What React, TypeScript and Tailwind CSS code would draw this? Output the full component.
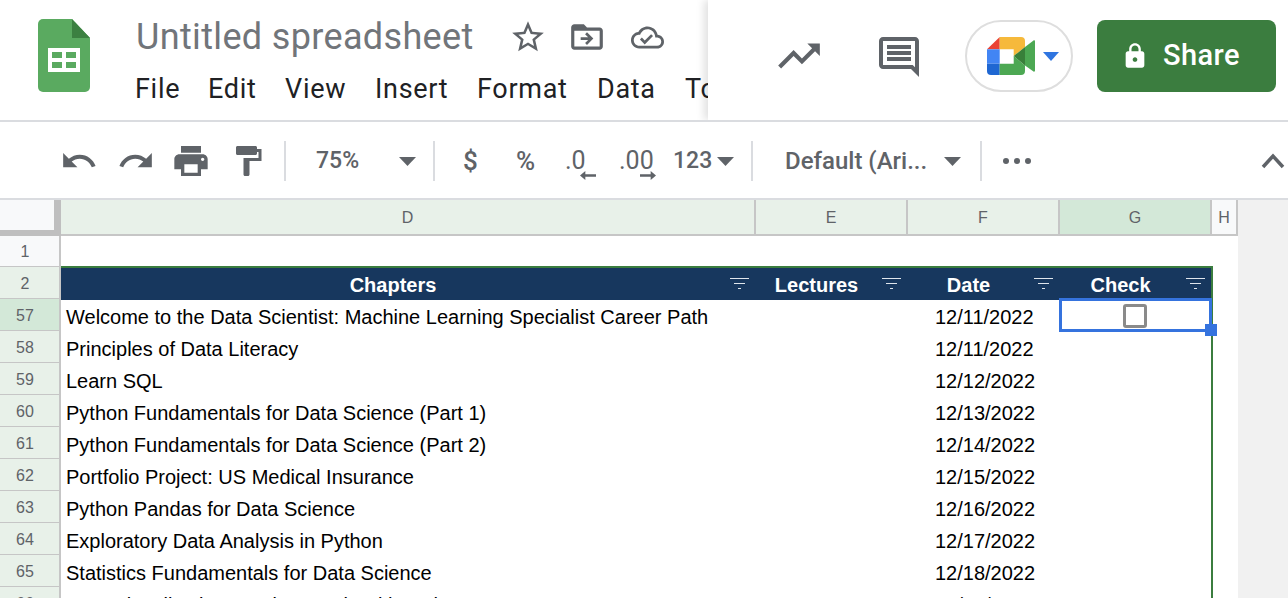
const GREY = '#5f6368';

const ROWS = [
  { n: 57, text: 'Welcome to the Data Scientist: Machine Learning Specialist Career Path', date: '12/11/2022' },
  { n: 58, text: 'Principles of Data Literacy', date: '12/11/2022' },
  { n: 59, text: 'Learn SQL', date: '12/12/2022' },
  { n: 60, text: 'Python Fundamentals for Data Science (Part 1)', date: '12/13/2022' },
  { n: 61, text: 'Python Fundamentals for Data Science (Part 2)', date: '12/14/2022' },
  { n: 62, text: 'Portfolio Project: US Medical Insurance', date: '12/15/2022' },
  { n: 63, text: 'Python Pandas for Data Science', date: '12/16/2022' },
  { n: 64, text: 'Exploratory Data Analysis in Python', date: '12/17/2022' },
  { n: 65, text: 'Statistics Fundamentals for Data Science', date: '12/18/2022' },
  { n: 66, text: 'Data Visualization Fundamentals with Python', date: '12/19/2022' },
];

const MENU = [
  { label: 'File', cls: 'w-[73px]' },
  { label: 'Edit', cls: 'w-[77px]' },
  { label: 'View', cls: 'w-[90px]' },
  { label: 'Insert', cls: 'w-[102px]' },
  { label: 'Format', cls: 'w-[120px]' },
  { label: 'Data', cls: 'w-[88px]' },
  { label: 'Tools', cls: 'w-[70px]' },
];

function Icon({ d, size, className }: { d: string; size: number; className?: string }) {
  return (
    <svg width={size} height={size} viewBox="0 0 24 24" fill={GREY} className={className}>
      <path d={d} />
    </svg>
  );
}

function Caret({ className }: { className?: string }) {
  return (
    <svg width="17" height="9" viewBox="0 0 17 9" className={className}>
      <path d="M0 0h17l-8.5 9z" fill={GREY} />
    </svg>
  );
}

function Divider({ className }: { className?: string }) {
  return <div className={`h-10 w-0.5 shrink-0 bg-[#dadce0] ${className ?? ''}`} />;
}

function SheetsLogo() {
  return (
    <svg width="52" height="73" viewBox="0 0 52 73" className="shrink-0">
      <path d="M5 0h29l18 19v49a5 5 0 0 1-5 5H5a5 5 0 0 1-5-5V5a5 5 0 0 1 5-5z" fill="#5aaa60" />
      <path d="M34 0l18 19H34z" fill="#3c8041" />
      <path d="M10 29h32v24H10z" fill="#fff" />
      <path d="M14 33h10v6H14zM28 33h10v6H28zM14 43h10v6H14zM28 43h10v6H28z" fill="#5aaa60" />
    </svg>
  );
}

function MeetLogo() {
  return (
    <svg width="48" height="38" viewBox="0 0 48 38">
      <path d="M0 12.3L12.7 0v12.3z" fill="#ea4335" />
      <path d="M12.7 0H34a4 4 0 0 1 4 4v6L26.7 19v-6.7h-14z" fill="#f6b93b" />
      <path d="M0 12.3h12.7v14.4H0z" fill="#4285f4" />
      <path d="M0 26.7h12.7V38H4a4 4 0 0 1-4-4z" fill="#1f67d2" />
      <path d="M12.7 26.7h14V19L38 28.5V34a4 4 0 0 1-4 4H12.7z" fill="#4ca853" />
      <path d="M26.7 19L38 10v18.5z" fill="#38803a" />
      <path d="M38 10l8.5-6.5c.8-.5 1.5 0 1.5 1v29c0 1-.7 1.5-1.5 1L38 28.5z" fill="#4ca853" />
    </svg>
  );
}

function FilterIcon() {
  return (
    <svg width="19" height="12" viewBox="0 0 19 12" className="mr-[7px] ml-[5px] shrink-0">
      <path d="M0 0h19v1H0zM4 5h11v1H4zM8 10h3v1H8z" fill="#dfe5ec" />
    </svg>
  );
}

function ColHeader({ label, cls }: { label: string; cls: string }) {
  return (
    <div className={`flex items-center justify-center border-r-2 border-[#c6c6c6] pt-0.5 text-base text-[#5f6368] ${cls}`}>
      {label}
    </div>
  );
}

function HeadCell({ label, cls }: { label: string; cls: string }) {
  return (
    <div className={`flex items-center ${cls}`}>
      <span className="flex-1 pt-0.5 text-center text-[20px] font-bold text-white">{label}</span>
      <FilterIcon />
    </div>
  );
}

export default function App() {
  return (
    <div className="relative h-[598px] w-[1288px] overflow-hidden bg-white font-['Liberation_Sans',sans-serif]">
      {/* title + menu */}
      <div className="relative flex h-[122px] overflow-hidden border-b-2 border-[#dadce0] pt-[19px] pl-[38px]">
        <SheetsLogo />
        <div className="ml-[46px] flex min-w-[800px] flex-col font-['Roboto',sans-serif]">
          <div className="flex h-[36px] items-center">
            <span className="w-[373px] text-[36px] leading-none font-normal tracking-[0.35px] text-[#71757a]">
              Untitled spreadsheet
            </span>
            <Icon
              size={38}
              d="M22 9.24l-7.19-.62L12 2 9.19 8.63 2 9.24l5.46 4.73L5.82 21 12 17.27 18.18 21l-1.63-7.03L22 9.24zM12 15.4l-3.76 2.27 1-4.28-3.32-2.88 4.38-.38L12 6.1l1.71 4.04 4.38.38-3.32 2.88 1 4.28L12 15.4z"
            />
            <Icon
              size={38}
              className="ml-[21px]"
              d="M20 6h-8l-2-2H4c-1.1 0-2 .9-2 2v12c0 1.1.9 2 2 2h16c1.1 0 2-.9 2-2V8c0-1.1-.9-2-2-2zm0 12H4V8h16v10zm-8-1l4-4-4-4-1.2 1.2 1.9 1.9H8v1.8h4.7l-1.9 1.9z"
            />
            <Icon
              size={33}
              className="ml-[25px]"
              d="M19.35 10.04C18.67 6.59 15.64 4 12 4 9.11 4 6.6 5.64 5.35 8.04 2.34 8.36 0 10.91 0 14c0 3.31 2.69 6 6 6h13c2.76 0 5-2.24 5-5 0-2.64-2.05-4.78-4.65-4.96zM19 18H6c-2.21 0-4-1.79-4-4 0-2.05 1.53-3.76 3.56-3.97l1.07-.11.5-.95C8.08 7.14 9.94 6 12 6c2.62 0 4.88 1.86 5.39 4.43l.3 1.5 1.53.11c1.56.1 2.78 1.41 2.78 2.96 0 1.65-1.35 3-3 3zm-9-3.82l-2.09-2.09L6.5 13.5 10 17l6.01-6.01-1.41-1.41z"
            />
          </div>
          <div className="mt-4 -ml-px flex text-[27px] leading-[36px] tracking-[0.7px] text-[#202124]">
            {MENU.map((m) => (
              <span key={m.label} className={`shrink-0 ${m.cls}`}>
                {m.label}
              </span>
            ))}
          </div>
        </div>

        {/* right part of the bar sits over the clipped menu */}
        <div className="absolute top-0 right-0 bottom-0 flex w-[580px] items-center bg-white pb-2 pl-[66px] shadow-[-4px_0_8px_rgba(0,0,0,0.12)]">
          <Icon size={50} d="M16 6l2.29 2.29-4.88 4.88-4-4L2 16.59 3.41 18l6-6 4 4 6.3-6.29L22 12V6z" />
          <Icon
            size={48}
            className="mt-0.5 ml-[51px]"
            d="M21.99 4c0-1.1-.89-2-1.99-2H4c-1.1 0-2 .9-2 2v12c0 1.1.9 2 2 2h14l4 4-.01-18zM20 4v13.17L18.83 16H4V4h16zM6 12h12v2H6zm0-3h12v2H6zm0-3h12v2H6z"
          />
          <div className="ml-[42px] flex h-[72px] w-[108px] items-center rounded-full border-2 border-[#dedede] pl-5">
            <MeetLogo />
            <svg width="16" height="9" viewBox="0 0 16 9" className="ml-2">
              <path d="M0 0h16L8 9z" fill="#2f75e0" />
            </svg>
          </div>
          <div className="ml-6 flex h-[72px] w-[179px] items-center rounded-lg bg-[#3b7d3f] pl-6 font-['Roboto',sans-serif] text-[29px] font-medium tracking-[0.4px] text-white">
            <svg width="28" height="28" viewBox="0 0 24 24" fill="#fff">
              <path d="M18 8h-1V6c0-2.76-2.24-5-5-5S7 3.24 7 6v2H6c-1.1 0-2 .9-2 2v10c0 1.1.9 2 2 2h12c1.1 0 2-.9 2-2V10c0-1.1-.9-2-2-2zm-6 9c-1.1 0-2-.9-2-2s.9-2 2-2 2 .9 2 2-.9 2-2 2zm3-9H9V6c0-1.66 1.34-3 3-3s3 1.34 3 3v2z" />
            </svg>
            <span className="ml-[14px]">Share</span>
          </div>
        </div>
      </div>

      {/* toolbar */}
      <div className="flex h-[78px] items-center border-b-2 border-[#dadce0] pt-0.5 font-['Roboto',sans-serif] text-[24px] font-medium text-[#5f6368]">
        <Icon
          size={38}
          className="ml-[60px] shrink-0"
          d="M12.5 8c-2.65 0-5.05.99-6.9 2.6L2 7v9h9l-3.62-3.62c1.39-1.16 3.16-1.88 5.12-1.88 3.54 0 6.55 2.31 7.6 5.5l2.37-.78C21.08 11.03 17.15 8 12.5 8z"
        />
        <Icon
          size={38}
          className="ml-[19px] shrink-0"
          d="M18.4 10.6C16.55 8.99 14.15 8 11.5 8c-4.65 0-8.58 3.03-9.96 7.22L3.9 16c1.05-3.19 4.05-5.5 7.6-5.5 1.95 0 3.73.72 5.12 1.88L13 16h9V7l-3.6 3.6z"
        />
        <Icon
          size={40}
          className="ml-[16px] shrink-0"
          d="M19 8H5c-1.66 0-3 1.34-3 3v6h4v4h12v-4h4v-6c0-1.66-1.34-3-3-3zm-3 11H8v-5h8v5zm3-7c-.55 0-1-.45-1-1s.45-1 1-1 1 .45 1 1-.45 1-1 1zm-1-9H6v4h12V3z"
        />
        <Icon
          size={36}
          className="ml-[19px] shrink-0"
          d="M18 4V3c0-.55-.45-1-1-1H5c-.55 0-1 .45-1 1v4c0 .55.45 1 1 1h12c.55 0 1-.45 1-1V6h1v4H9v11c0 .55.45 1 1 1h2c.55 0 1-.45 1-1v-9h8V4h-3z"
        />
        <Divider className="ml-[18px]" />
        <span className="ml-[30px] w-[45px] text-[23px]">75%</span>
        <Caret className="ml-[38px] shrink-0" />
        <Divider className="ml-[17px]" />
        <span className="ml-[28px] w-[16px] text-[26px]">$</span>
        <span className="ml-[37px] w-[24px] text-[26px]">%</span>
        <span className="relative ml-[25px] w-[24px] text-[25px] font-normal">
          .0
          <svg width="16" height="9" viewBox="0 0 18 10" className="absolute top-[29px] left-[15px]">
            <path d="M6 0v3.5h12v3H6V10L0 5z" fill={GREY} />
          </svg>
        </span>
        <span className="relative ml-[30px] w-[36px] text-[25px] font-normal">
          .00
          <svg width="16" height="9" viewBox="0 0 18 10" className="absolute top-[29px] left-[21px]">
            <path d="M12 0v3.5H0v3h12V10l6-5z" fill={GREY} />
          </svg>
        </span>
        <span className="ml-[18px] w-[41px] text-[23px]">123</span>
        <Caret className="ml-[3px] shrink-0" />
        <Divider className="ml-[17px]" />
        <span className="ml-[32px] w-[142px] whitespace-nowrap">Default (Ari...</span>
        <Caret className="ml-[17px] shrink-0" />
        <Divider className="ml-[19px]" />
        <svg width="28" height="6" viewBox="0 0 28 6" className="ml-[21px] shrink-0">
          <circle cx="3" cy="3" r="3" fill={GREY} />
          <circle cx="14" cy="3" r="3" fill={GREY} />
          <circle cx="25" cy="3" r="3" fill={GREY} />
        </svg>
        <svg width="24" height="16" viewBox="0 0 24 16" className="ml-[230px] shrink-0">
          <path d="M2 14L12 3l10 11" fill="none" stroke={GREY} strokeWidth="3.5" />
        </svg>
      </div>

      {/* grid */}
      <div className="flex h-[36px]">
        <div className="w-[61px] shrink-0 bg-[#bfbfbf]">
          <div className="h-[30px] w-[54px] bg-[#f8f9fa]" />
        </div>
        <div className="flex flex-1 flex-col">
          <div className="flex h-[34px]">
            <ColHeader label="D" cls="w-[695px] bg-[#e8f1e9]" />
            <ColHeader label="E" cls="w-[152px] bg-[#e8f1e9]" />
            <ColHeader label="F" cls="w-[152px] bg-[#e8f1e9]" />
            <ColHeader label="G" cls="w-[152px] bg-[#d3e8d8]" />
            <ColHeader label="H" cls="w-[26px] bg-[#f8f9fa]" />
            <div className="flex-1 bg-[#f1f1f1]" />
          </div>
          <div className="flex h-0.5">
            <div className="w-[1177px] bg-[#c6c6c6]" />
            <div className="flex-1 bg-[#f1f1f1]" />
          </div>
        </div>
      </div>

      <div className="relative flex">
        {/* row numbers */}
        <div className="w-[61px] shrink-0 border-r-2 border-[#c6c6c6] text-base text-[#5f6368]">
          <div className="flex h-[31px] items-center justify-center border-b border-[#c6c6c6] bg-[#f8f9fa] pt-0.5 pr-[9px]">1</div>
          <div className="flex h-8 items-center justify-center border-b border-[#c6c6c6] bg-[#e8f1e9] pt-0.5 pr-[9px]">2</div>
          {ROWS.map((r) => (
            <div
              key={r.n}
              className={`flex h-8 items-center justify-center border-b border-[#c6c6c6] pt-0.5 pr-[9px] ${
                r.n === 57 ? 'bg-[#d3e8d8]' : 'bg-[#e8f1e9]'
              }`}
            >
              {r.n}
            </div>
          ))}
        </div>

        {/* cells */}
        <div className="w-[1177px] shrink-0 text-[20px] text-black">
          <div className="h-[30px]" />
          <div className="mr-[25px] flex h-[34px] border-t-2 border-[#3b7d3f] bg-[#17375e]">
            <HeadCell label="Chapters" cls="w-[695px]" />
            <HeadCell label="Lectures" cls="w-[152px]" />
            <HeadCell label="Date" cls="w-[152px]" />
            <HeadCell label="Check" cls="w-[152px]" />
          </div>
          {ROWS.map((r) => (
            <div key={r.n} className="relative flex h-8 items-center pt-0.5">
              <span className="w-[874px] shrink-0 pl-[5px] whitespace-nowrap">{r.text}</span>
              <span className="w-[125px] shrink-0">{r.date}</span>
              {r.n === 57 && (
                <span className="-mt-0.5 ml-[63px] h-6 w-6 rounded-[3px] border-[3px] border-[#8a8a8a]" />
              )}
            </div>
          ))}
        </div>
        <div className="flex-1 bg-[#f1f1f1]" />

        {/* range edge and selection sit over the cells */}
        <div className="absolute top-[30px] left-[1211px] h-[400px] w-0.5 bg-[#3b7d3f]" />
        <div className="absolute top-[62px] left-[1059px] h-[34px] w-[153px] border-[3px] border-[#3573de]" />
        <div className="absolute top-[88px] left-[1205px] h-3 w-3 bg-[#3573de]" />
      </div>
    </div>
  );
}
